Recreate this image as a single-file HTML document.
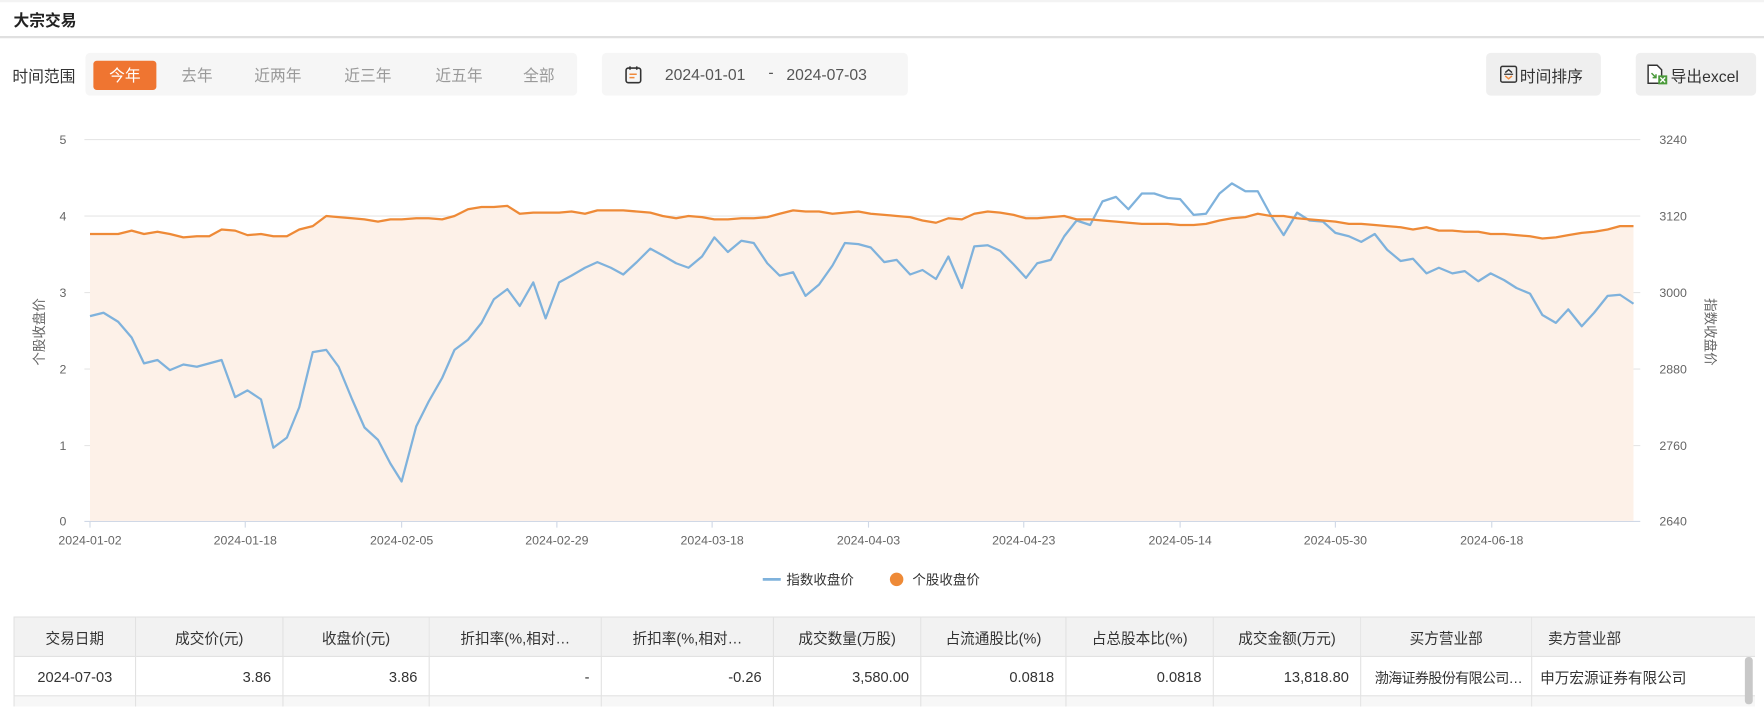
<!DOCTYPE html>
<html><head><meta charset="utf-8"><style>
html,body{margin:0;padding:0;width:1764px;height:704px;overflow:hidden;background:#fff;}
#w{position:absolute;left:0;top:0;width:1568px;height:626px;transform:scale(1.125);transform-origin:0 0;font-family:"Liberation Sans","Noto Sans CJK SC",sans-serif;color:#333;}
.a{position:absolute;}
.tab{position:absolute;top:54px;height:26px;line-height:26px;font-size:14px;color:#999;text-align:center;}
table{border-collapse:collapse;table-layout:fixed;font-size:13px;}
td,th{border:1px solid #e2e2e2;height:34px;padding:0 10px;white-space:nowrap;overflow:hidden;text-overflow:ellipsis;font-weight:normal;color:#333;}
th{background:#f2f2f2;text-align:center;}
td{text-align:right;}
</style></head><body><div id="w">
<div class="a" style="left:0;top:0;width:1568px;height:2px;background:#f3f3f3"></div>
<div class="a" style="left:12px;top:8px;font-size:14px;font-weight:bold;color:#222">大宗交易</div>
<div class="a" style="left:0;top:32px;width:1568px;height:2px;background:#e0e0e0"></div>

<div class="a" style="left:11px;top:58px;font-size:14px;color:#333">时间范围</div>
<div class="a" style="left:76px;top:47px;width:437px;height:38px;background:#f6f6f6;border-radius:4px"></div>
<div class="a" style="left:83px;top:54px;width:56px;height:26px;background:#ef7531;border-radius:3px"></div>
<div class="tab" style="left:83px;width:56px;color:#fff">今年</div>
<div class="tab" style="left:150px;width:50px">去年</div>
<div class="tab" style="left:217px;width:60px">近两年</div>
<div class="tab" style="left:297px;width:60px">近三年</div>
<div class="tab" style="left:378px;width:60px">近五年</div>
<div class="tab" style="left:454px;width:50px">全部</div>

<div class="a" style="left:535px;top:47px;width:272px;height:38px;background:#f6f6f6;border-radius:4px"></div>
<svg class="a" style="left:555px;top:58px" width="16" height="17" viewBox="0 0 16 17"><rect x="1.5" y="2.5" width="13" height="13" rx="2" fill="none" stroke="#333" stroke-width="1.4"/><line x1="5" y1="1" x2="5" y2="4" stroke="#333" stroke-width="1.4"/><line x1="11" y1="1" x2="11" y2="4" stroke="#333" stroke-width="1.4"/><line x1="4.5" y1="8" x2="11" y2="8" stroke="#f08a3c" stroke-width="1.4"/><line x1="4.5" y1="11" x2="9" y2="11" stroke="#f08a3c" stroke-width="1.4"/></svg>
<div class="a" style="left:591px;top:58px;font-size:14px;color:#555">2024-01-01</div>
<div class="a" style="left:683px;top:56px;font-size:14px;color:#555">-</div>
<div class="a" style="left:699px;top:58px;font-size:14px;color:#555">2024-07-03</div>

<div class="a" style="left:1321px;top:47px;width:102px;height:38px;background:#efefef;border-radius:4px"></div>
<svg class="a" style="left:1333px;top:58px" width="16" height="16" viewBox="0 0 16 16"><rect x="1" y="1" width="14" height="14" rx="1.5" fill="none" stroke="#333" stroke-width="1.3"/><path d="M5 6.5 L8 4 L11 6.5" fill="none" stroke="#333" stroke-width="1.3"/><line x1="4" y1="8" x2="12" y2="8" stroke="#333" stroke-width="1.2"/><path d="M5 9.5 L8 12 L11 9.5" fill="none" stroke="#f08a3c" stroke-width="1.3"/></svg>
<div class="a" style="left:1351px;top:58px;font-size:14px;color:#333">时间排序</div>
<div class="a" style="left:1454px;top:47px;width:107px;height:38px;background:#efefef;border-radius:4px"></div>
<svg class="a" style="left:1463px;top:57px" width="20" height="19" viewBox="0 0 20 19"><path d="M2 1 H10 L14 5 V17 H2 Z" fill="#fff" stroke="#333" stroke-width="1.3"/><path d="M5 8 L9 12 M9 9 V12 H6" fill="none" stroke="#4a9a3a" stroke-width="1.3"/><rect x="11" y="10" width="8" height="8" fill="#4a9a3a"/><path d="M12.8 11.8 L17.2 16.2 M17.2 11.8 L12.8 16.2" stroke="#fff" stroke-width="1.2"/></svg>
<div class="a" style="left:1485px;top:58px;font-size:14px;color:#333">导出excel</div>

<svg class="a" style="left:0;top:0" width="1568" height="540" viewBox="0 0 1568 540" font-family="Liberation Sans, Noto Sans CJK SC, sans-serif">
<g stroke="#e6e6e6" stroke-width="1">
<line x1="75" y1="124" x2="1458" y2="124"/><line x1="75" y1="192" x2="1458" y2="192"/><line x1="75" y1="260" x2="1458" y2="260"/><line x1="75" y1="328" x2="1458" y2="328"/><line x1="75" y1="396" x2="1458" y2="396"/></g>
<line x1="75" y1="463.5" x2="1458" y2="463.5" stroke="#d0d8e6" stroke-width="1"/>
<g stroke="#d0d8e6"><line x1="80" y1="464" x2="80" y2="469"/><line x1="218" y1="464" x2="218" y2="469"/><line x1="357" y1="464" x2="357" y2="469"/><line x1="495" y1="464" x2="495" y2="469"/><line x1="633" y1="464" x2="633" y2="469"/><line x1="772" y1="464" x2="772" y2="469"/><line x1="910" y1="464" x2="910" y2="469"/><line x1="1049" y1="464" x2="1049" y2="469"/><line x1="1187" y1="464" x2="1187" y2="469"/><line x1="1326" y1="464" x2="1326" y2="469"/></g>
<g font-size="11" fill="#666" text-anchor="end"><text x="59" y="128">5</text><text x="59" y="196">4</text><text x="59" y="264">3</text><text x="59" y="332">2</text><text x="59" y="400">1</text><text x="59" y="467">0</text></g>
<g font-size="11" fill="#666"><text x="1475" y="128">3240</text><text x="1475" y="196">3120</text><text x="1475" y="264">3000</text><text x="1475" y="332">2880</text><text x="1475" y="400">2760</text><text x="1475" y="467">2640</text></g>
<g font-size="11" fill="#666" text-anchor="middle"><text x="80" y="484">2024-01-02</text><text x="218" y="484">2024-01-18</text><text x="357" y="484">2024-02-05</text><text x="495" y="484">2024-02-29</text><text x="633" y="484">2024-03-18</text><text x="772" y="484">2024-04-03</text><text x="910" y="484">2024-04-23</text><text x="1049" y="484">2024-05-14</text><text x="1187" y="484">2024-05-30</text><text x="1326" y="484">2024-06-18</text></g>
<text transform="translate(39,295) rotate(-90)" font-size="12" fill="#666" text-anchor="middle">个股收盘价</text>
<text transform="translate(1516,295) rotate(90)" font-size="12" fill="#666" text-anchor="middle">指数收盘价</text>
<polygon fill="#fdf1e8" points="80,463 80,208 92,208 105,208 117,205 128,208 140,206 151,208 163,211 175,210 186,210 197,204 209,205 220,209 232,208 243,210 255,210 266,204 278,201 290,192 301,193 313,194 324,195 336,197 347,195 357,195 370,194 381,194 393,195 404,192 416,186 428,184 439,184 451,183 462,190 474,189 485,189 497,189 508,188 520,190 531,187 543,187 554,187 566,188 578,189 589,192 601,194 612,192 624,193 635,195 647,195 659,194 670,194 682,193 693,190 705,187 716,188 728,188 740,190 751,189 763,188 774,190 786,191 797,192 809,193 820,196 832,198 843,194 855,195 866,190 878,188 889,189 901,191 912,194 922,194 934,193 946,192 957,195 969,195 980,196 992,197 1003,198 1015,199 1026,199 1038,199 1049,200 1061,200 1072,199 1084,196 1095,194 1107,193 1118,190 1130,192 1141,192 1153,194 1164,195 1176,196 1187,197 1199,199 1210,199 1222,200 1233,201 1245,202 1256,204 1268,202 1279,205 1291,205 1302,206 1314,206 1325,208 1337,208 1348,209 1360,210 1371,212 1383,211 1394,209 1406,207 1417,206 1429,204 1440,201 1452,201 1452,463"/>
<polyline fill="none" stroke="#7fb2dc" stroke-width="2" stroke-linejoin="round" points="80,281 92,278 105,286 117,300 128,323 140,320 151,329 163,324 175,326 186,323 197,320 209,353 220,347 232,355 243,398 255,389 266,362 278,313 290,311 301,326 313,355 324,380 336,391 347,412 357,428 370,379 381,357 393,336 404,311 416,302 428,287 439,266 451,257 462,272 474,251 485,283 497,251 508,245 520,238 531,233 543,238 554,244 566,233 578,221 589,227 601,234 612,238 624,228 635,211 647,224 659,214 670,216 682,234 693,245 705,242 716,263 728,253 740,236 751,216 763,217 774,220 786,233 797,231 809,244 820,240 832,248 843,228 855,256 866,219 878,218 889,223 901,235 912,247 922,234 934,231 946,210 957,196 969,200 980,179 992,175 1003,186 1015,172 1026,172 1038,176 1049,177 1061,191 1072,190 1084,172 1095,163 1107,170 1118,170 1130,192 1141,209 1153,189 1164,196 1176,197 1187,207 1199,210 1210,215 1222,208 1233,222 1245,232 1256,230 1268,243 1279,238 1291,243 1302,241 1314,250 1325,243 1337,249 1348,256 1360,261 1371,280 1383,287 1394,275 1406,290 1417,278 1429,263 1440,262 1452,270"/>
<polyline fill="none" stroke="#ee8a37" stroke-width="2" stroke-linejoin="round" points="80,208 92,208 105,208 117,205 128,208 140,206 151,208 163,211 175,210 186,210 197,204 209,205 220,209 232,208 243,210 255,210 266,204 278,201 290,192 301,193 313,194 324,195 336,197 347,195 357,195 370,194 381,194 393,195 404,192 416,186 428,184 439,184 451,183 462,190 474,189 485,189 497,189 508,188 520,190 531,187 543,187 554,187 566,188 578,189 589,192 601,194 612,192 624,193 635,195 647,195 659,194 670,194 682,193 693,190 705,187 716,188 728,188 740,190 751,189 763,188 774,190 786,191 797,192 809,193 820,196 832,198 843,194 855,195 866,190 878,188 889,189 901,191 912,194 922,194 934,193 946,192 957,195 969,195 980,196 992,197 1003,198 1015,199 1026,199 1038,199 1049,200 1061,200 1072,199 1084,196 1095,194 1107,193 1118,190 1130,192 1141,192 1153,194 1164,195 1176,196 1187,197 1199,199 1210,199 1222,200 1233,201 1245,202 1256,204 1268,202 1279,205 1291,205 1302,206 1314,206 1325,208 1337,208 1348,209 1360,210 1371,212 1383,211 1394,209 1406,207 1417,206 1429,204 1440,201 1452,201"/>
<line x1="678" y1="515" x2="694" y2="515" stroke="#7fb2dc" stroke-width="2.5"/>
<text x="699" y="519.5" font-size="12" fill="#333">指数收盘价</text>
<circle cx="797" cy="515" r="6" fill="#ee8a37"/>
<text x="811" y="519.5" font-size="12" fill="#333">个股收盘价</text>
</svg>

<div class="a" style="left:12px;top:548px;width:1548px;height:80px;overflow:hidden">
<table style="width:1600px">
<colgroup><col style="width:108px"><col style="width:131px"><col style="width:130px"><col style="width:153px"><col style="width:153px"><col style="width:131px"><col style="width:129px"><col style="width:131px"><col style="width:131px"><col style="width:152px"><col style="width:251px"></colgroup>
<tr><th>交易日期</th><th>成交价(元)</th><th>收盘价(元)</th><th>折扣率(%,相对…</th><th>折扣率(%,相对…</th><th>成交数量(万股)</th><th>占流通股比(%)</th><th>占总股本比(%)</th><th>成交金额(万元)</th><th>买方营业部</th><th style="text-align:left;padding-left:14px">卖方营业部</th></tr>
<tr><td style="text-align:center">2024-07-03</td><td>3.86</td><td>3.86</td><td>-</td><td>-0.26</td><td>3,580.00</td><td>0.0818</td><td>0.0818</td><td>13,818.80</td><td style="text-align:left;padding:0 4px 0 12px;font-size:12.5px;letter-spacing:-0.6px">渤海证券股份有限公司重…</td><td style="text-align:left;padding-left:7px">申万宏源证券有限公司</td></tr>
<tr style="background:#f7f7f7"><td></td><td></td><td></td><td></td><td></td><td></td><td></td><td></td><td></td><td></td><td></td></tr>
</table>
</div>
<div class="a" style="left:1551px;top:584px;width:7px;height:42px;background:#c8c8c8;border-radius:3px"></div>
</div></body></html>
